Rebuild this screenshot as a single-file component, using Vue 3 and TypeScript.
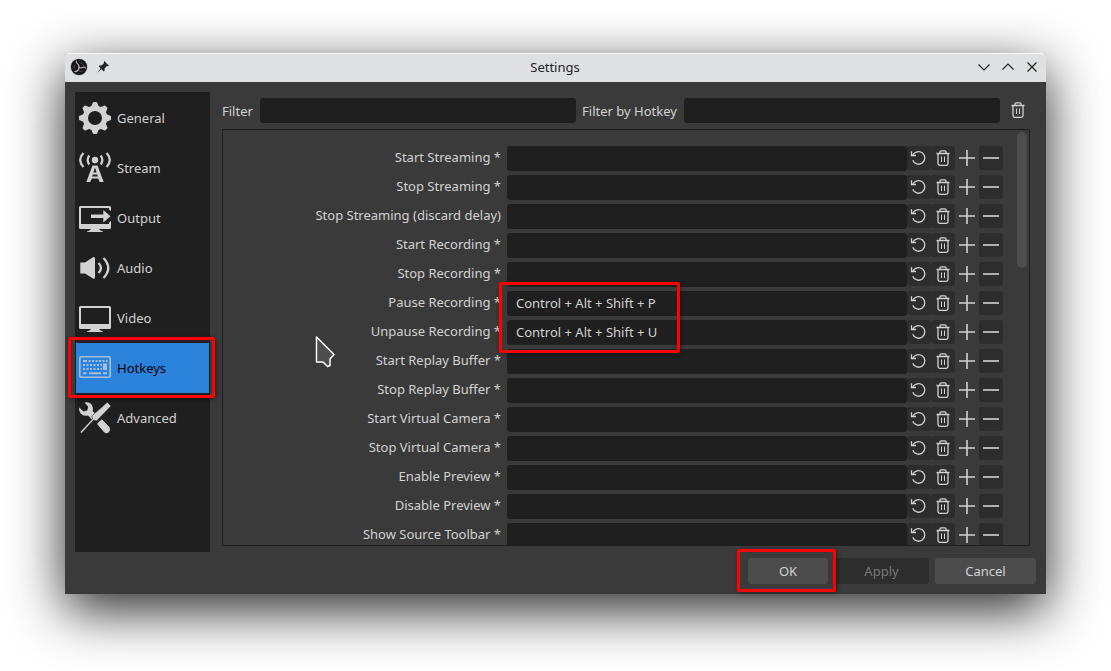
<script setup lang="ts">
import { ref } from 'vue'

interface Hotkey {
  id: string
  label: string
  keys: string
  marked?: boolean
}

const sections = ['General', 'Stream', 'Output', 'Audio', 'Video', 'Hotkeys', 'Advanced']
const active = ref('Hotkeys')
const filter = ref('')
const filterHotkey = ref('')

const names: string[] = [
  'Start Streaming *',
  'Stop Streaming *',
  'Stop Streaming (discard delay)',
  'Start Recording *',
  'Stop Recording *',
  'Pause Recording *',
  'Unpause Recording *',
  'Start Replay Buffer *',
  'Stop Replay Buffer *',
  'Start Virtual Camera *',
  'Stop Virtual Camera *',
  'Enable Preview *',
  'Disable Preview *',
  'Show Source Toolbar *',
]
const bound: Record<string, string> = {
  'Pause Recording *': 'Control + Alt + Shift + P',
  'Unpause Recording *': 'Control + Alt + Shift + U',
}
const hotkeys = ref<Hotkey[]>(
  names.map((label, i) => ({
    id: `hotkey-${i}`,
    label,
    keys: bound[label] ?? '',
    marked: label === 'Pause Recording *',
  })),
)
const teeth = [0, 45, 90, 135, 180, 225, 270, 315]
</script>

<template>
  <svg class="defs" aria-hidden="true">
    <symbol id="trash" viewBox="0 0 24 24">
      <g fill="none" stroke="currentColor" stroke-width="1.3">
        <path d="M5.500 7.500h13M9 7V5.700q0-.9 1-.9h4q1 0 1 .9V7M7 7.500v10q0 1.800 1.800 1.800h6.400q1.800 0 1.800-1.800v-10" />
        <path d="M10.500 10.500v5.500M13.500 10.500v5.500" stroke-width="1" />
      </g>
    </symbol>
    <symbol id="revert" viewBox="0 0 24 24">
      <g fill="none" stroke="currentColor" stroke-width="1.3">
        <path d="M5.800 9.300A6.300 6.300 0 1 1 5.700 14.300" />
        <path d="M4.500 5.200v4.300h4.500" />
      </g>
    </symbol>
    <symbol id="plus" viewBox="0 0 24 24">
      <path d="M4 12h16M12 4v16" fill="none" stroke="currentColor" stroke-width="1.6" />
    </symbol>
    <symbol id="minus" viewBox="0 0 24 24">
      <path d="M4 12h16" fill="none" stroke="currentColor" stroke-width="1.6" />
    </symbol>
  </svg>

  <div class="desktop">
    <section class="window" aria-label="Settings">
      <header class="titlebar">
        <div class="title-side">
          <svg class="logo" viewBox="0 0 18 18" aria-hidden="true">
            <circle cx="9" cy="9" r="8.600" fill="#9c9c9e" />
            <circle cx="9" cy="9" r="8" fill="#151417" />
            <g fill="none" stroke="#b5b3b6" stroke-width="1.200" stroke-linecap="round">
              <path d="M9 9.200C9.300 6.400 7.800 6.200 6.800 5.200C6.300 4.600 6.200 3.900 6.400 3.200" />
              <path d="M9 9.200C11.300 10.800 12.200 9.600 13.600 9.200C14.400 9 15 9.300 15.500 9.800" />
              <path d="M9 9.200C9.200 11.800 8 12.600 6.700 13.100C6 13.500 5.500 13.600 4.800 13.500" />
            </g>
            <path d="M10 4.500q3 .6 3.600 3M5 7q-1.300 1.600-.8 3.600M9.500 13.500q2 .6 3.500-.8" fill="none" stroke="#4b494d" />
          </svg>
          <button class="plain" type="button" aria-label="Keep above">
            <svg width="14" height="14" viewBox="0 0 14 14">
              <path d="M8.300 1L13 5.700L11.900 6.200L11 5.900L8.700 8.200L8.600 10.600L7.700 11.400L5.600 9.300L1.200 12.800L4.700 8.400L2.600 6.300L3.400 5.400L5.900 5.300L8.100 3L7.800 2.100Z" fill="#232629" />
            </svg>
          </button>
        </div>
        <h1>Settings</h1>
        <div class="title-side end">
          <button class="plain" type="button" aria-label="Minimize">
            <svg width="14" height="14" viewBox="0 0 14 14"><path d="M1.500 4.500L7 10l5.500-5.500" /></svg>
          </button>
          <button class="plain" type="button" aria-label="Maximize">
            <svg width="14" height="14" viewBox="0 0 14 14"><path d="M1.500 9.500L7 4l5.500 5.500" /></svg>
          </button>
          <button class="plain" type="button" aria-label="Close">
            <svg width="14" height="14" viewBox="0 0 14 14"><path d="M2.500 2.500l9 9M11.500 2.500l-9 9" /></svg>
          </button>
        </div>
      </header>

      <div class="body">
        <div class="columns">
          <nav class="sidebar" aria-label="Sections">
            <button
              v-for="s in sections"
              :key="s"
              type="button"
              class="section"
              :class="{ active: s === active }"
              @click="active = s"
            >
              <svg class="section-icon" viewBox="0 0 32 32" aria-hidden="true">
                <g v-if="s === 'General'" fill="currentColor">
                  <circle cx="16" cy="16" r="9.700" fill="none" stroke="currentColor" stroke-width="5.400" />
                  <path v-for="a in teeth" :key="a" d="M11.800 5.500L13.800 .8Q14 0 14.800 0h2.400Q18 0 18.200 .8L20.200 5.500z" :transform="`rotate(${a} 16 16)`" />
                </g>
                <g v-else-if="s === 'Stream'" fill="none" stroke="currentColor" stroke-width="2.200">
                  <circle cx="16" cy="8" r="3.200" fill="currentColor" stroke="none" />
                  <path d="M10.300 3.500Q7 8 10.300 12.500M21.700 3.500Q25 8 21.700 12.500M4.400 1Q-2 8 4.400 15M27.600 1Q34 8 27.600 15" />
                  <path d="M13.500 13.500h5l6.200 16.500h-4l-1.500-3.500h-6.400L11.300 30h-4zM16 15.500l-1.600 5h3.200zM13.800 22.500l-.7 2h5.800l-.7-2z" fill="currentColor" fill-rule="evenodd" stroke="none" />
                </g>
                <g v-else-if="s === 'Output'" fill="currentColor">
                  <path d="M1.500 4h29Q32 4 32 5.500V9l-2-1.500V6H2v16h28v-1.500l2-1.500v6.500Q32 27 30.500 27H20.500v1l3.500 1.500v.5H8v-.5l3.500-1.500v-1H1.500Q0 27 0 25.500v-20Q0 4 1.500 4z" />
                  <path d="M12 12.500h12.300V8L31.500 14.200 24.300 20.500V16H12z" />
                </g>
                <g v-else-if="s === 'Audio'" fill="currentColor">
                  <path d="M1.300 10.500H6L14 5.200Q16 4.500 16 6.500v19Q16 27.500 14 26.500L6 21.500H1.300z" />
                  <path d="M19.500 11Q24.500 16 19.500 21M24.500 6Q34 16 24.500 26" fill="none" stroke="currentColor" stroke-width="2.300" />
                </g>
                <path v-else-if="s === 'Video'" fill="currentColor" fill-rule="evenodd" d="M1.500 4h29Q32 4 32 5.500v20Q32 27 30.500 27H20.500v1l3.500 1.500v.5H8v-.5l3.500-1.500v-1H1.500Q0 27 0 25.500v-20Q0 4 1.500 4zM2 6v16h28V6z" />
                <g v-else-if="s === 'Hotkeys'" fill="none" stroke="currentColor">
                  <rect x=".8" y="4.800" width="30.400" height="20.400" rx="1.500" stroke-width="1.600" />
                  <path d="M4 9h24.500" stroke-width="2" stroke-dasharray="4 1.500 2 1.500 2 1.500 2 1.500 2 1.500 2 1.500 2 40" />
                  <path d="M4 13h19M4 17h19" stroke-width="2" stroke-dasharray="2 1.500" />
                  <path d="M26 11.500v6.500" stroke-width="4" />
                  <path d="M4 21.200h3.500M10 21.200h12M24 21.200h4" stroke-width="2" />
                </g>
                <g v-else>
                  <path d="M5.500 .6Q10.500 -.6 13 3.400Q14.500 6 13.600 9L17.300 12.800L12.800 17.200L9 13.500Q4.500 14.700 1.700 11.500Q-.6 8.500 .3 5.600L4.400 9.500L8.200 8.600L9.200 4.800z" fill="currentColor" />
                  <path d="M18.500 21.800L22.800 17.800L30 25.200Q31.400 28 29.600 29.900Q27.800 31.800 25.400 30z" fill="currentColor" stroke="currentColor" stroke-linejoin="round" />
                  <path d="M28.300 .3L32 4L17.500 19L14.700 18L2.600 31.200L1.200 30.600L2 29L13.500 16.700L12.800 14z" fill="currentColor" stroke="#1f1f1f" stroke-width=".5" />
                </g>
              </svg>
              <span>{{ s }}</span>
              <i v-if="s === 'Hotkeys'" class="mark mark-section"></i>
            </button>
          </nav>

          <main class="panel">
            <div class="filters">
              <label for="filter">Filter</label>
              <input id="filter" v-model="filter" type="text" class="field" />
              <label for="filter-hotkey">Filter by Hotkey</label>
              <input id="filter-hotkey" v-model="filterHotkey" type="text" class="field" />
              <button type="button" class="tool bare" aria-label="Clear filter">
                <svg viewBox="0 0 24 24"><use href="#trash" /></svg>
              </button>
            </div>

            <div class="list">
              <div class="rows">
                <div v-for="h in hotkeys" :key="h.id" class="row">
                  <label :for="h.id">{{ h.label }}</label>
                  <div class="entry">
                    <input :id="h.id" v-model="h.keys" type="text" class="field" />
                    <i v-if="h.marked" class="mark mark-keys"></i>
                  </div>
                  <button type="button" class="tool" aria-label="Revert"><svg viewBox="0 0 24 24"><use href="#revert" /></svg></button>
                  <button type="button" class="tool" aria-label="Clear"><svg viewBox="0 0 24 24"><use href="#trash" /></svg></button>
                  <button type="button" class="tool bare" aria-label="Add"><svg viewBox="0 0 24 24"><use href="#plus" /></svg></button>
                  <button type="button" class="tool" aria-label="Remove"><svg viewBox="0 0 24 24"><use href="#minus" /></svg></button>
                </div>
              </div>
              <div class="scrollbar"><div class="thumb"></div></div>
            </div>
          </main>
        </div>

        <footer class="actions">
          <button type="button" class="ok">OK<i class="mark mark-ok"></i></button>
          <button type="button" class="apply" disabled>Apply</button>
          <button type="button" class="cancel">Cancel</button>
        </footer>
      </div>

      <svg class="pointer" viewBox="0 0 20 34" aria-hidden="true">
        <path d="M1.500 2L19 19.500L15 24V30.500L12.500 31.500L8 27H1.500z" fill="#4d4d4d" stroke="#fff" stroke-width="1.500" stroke-linejoin="round" />
      </svg>
    </section>
  </div>
</template>

<style>
body {
  margin: 0;
  background: #fff;
}
</style>

<style scoped>
.defs {
  position: absolute;
  width: 0;
  height: 0;
}
.desktop {
  box-sizing: border-box;
  display: flex;
  height: 100vh;
  padding: 53px 65px 77px;
  overflow: hidden;
  font: 13px/18px "Noto Sans", sans-serif;
  color: #d2d2d2;
}
button,
input {
  margin: 0;
  padding: 0;
  border: 0;
  font: inherit;
  color: inherit;
}
svg {
  display: block;
}
.window {
  position: relative;
  flex: 1;
  min-width: 0;
  display: flex;
  flex-direction: column;
  background: #3a3a3a;
  border-radius: 4px 4px 0 0;
  box-shadow: 0 16px 54px rgba(0, 0, 0, 0.85);
}
.titlebar {
  box-sizing: border-box;
  height: 29px;
  padding: 0 6px 1px 5px;
  display: grid;
  grid-template-columns: 1fr auto 1fr;
  align-items: center;
  background: #dee0e2;
  box-shadow: inset 0 1px #f8f8f8;
  border-radius: 4px 4px 0 0;
  color: #232629;
}
h1 {
  margin: 0;
  font-size: 13px;
  font-weight: 400;
}
.title-side {
  display: flex;
  align-items: center;
  gap: 7px;
}
.end {
  justify-content: flex-end;
  gap: 8px;
}
.logo {
  width: 18px;
  height: 18px;
}
.plain {
  width: 16px;
  height: 16px;
  display: grid;
  place-items: center;
  background: none;
}
.end path {
  fill: none;
  stroke: #232629;
  stroke-width: 1.2;
}
.body {
  flex: 1;
  min-height: 0;
  display: flex;
  flex-direction: column;
  gap: 6px;
  padding: 10px;
}
.columns {
  flex: 1;
  min-height: 0;
  display: flex;
  gap: 6px;
}
.sidebar {
  box-sizing: border-box;
  width: 135px;
  padding: 1px;
  background: #1f1f1f;
}
.section {
  position: relative;
  width: 100%;
  height: 50px;
  padding: 0 3px;
  display: flex;
  align-items: center;
  gap: 6px;
  background: none;
}
.section.active {
  background: #2a82da;
  color: #000;
}
.section-icon {
  width: 32px;
  height: 32px;
  flex: none;
  color: #d2d2d2;
}
.active .section-icon {
  color: #a9bfdc;
}
.panel {
  flex: 1;
  min-width: 0;
  display: flex;
  flex-direction: column;
  gap: 6px;
  padding: 6px;
}
.filters {
  display: flex;
  align-items: flex-start;
  gap: 6px;
}
.filters label {
  padding: 4px 1px 0 0;
}
.filters .field {
  flex: 1;
  min-width: 0;
}
.field {
  box-sizing: border-box;
  height: 25px;
  padding: 0 9px 1px;
  background: #1f1f1f;
  border-radius: 3px;
  outline: none;
}
.tool {
  width: 24px;
  height: 24px;
  flex: none;
  background: #2d2d2d;
  border-radius: 3px;
}
.bare {
  background: none;
}
.tool svg {
  width: 24px;
  height: 24px;
}
.list {
  flex: 1;
  min-height: 0;
  overflow: hidden;
  display: flex;
  gap: 14px;
  border: 1px solid #1f1f1f;
}
.rows {
  flex: 1;
  min-width: 0;
  display: flex;
  flex-direction: column;
  gap: 4px;
  padding-top: 16px;
}
.row {
  flex: none;
  display: flex;
  align-items: flex-start;
  height: 25px;
}
.row label {
  width: 278px;
  padding-top: 2px;
  margin-right: 6px;
  text-align: right;
}
.entry {
  position: relative;
  flex: 1;
  min-width: 0;
}
.entry .field {
  display: block;
  width: 100%;
}
.scrollbar {
  width: 10px;
  padding: 2px 2px 0 0;
}
.thumb {
  height: 136px;
  border-radius: 5px;
  background: #4d4d4d;
}
.actions {
  display: flex;
  justify-content: flex-end;
  gap: 6px;
}
.actions button {
  position: relative;
  height: 26px;
  background: #4c4c4c;
  border-radius: 3px;
}
.actions .ok {
  width: 80px;
  z-index: 1;
}
.actions .apply {
  width: 95px;
  background: #2d2d2d;
  color: #777;
}
.actions .cancel {
  width: 101px;
}
.mark {
  position: absolute;
  z-index: 2;
  border: 3px solid #f00;
  border-radius: 2px;
  box-shadow: 1px 1px 4px rgba(0, 0, 0, 0.4);
  pointer-events: none;
}
.mark-section {
  inset: -6px -6px -5px -8px;
}
.mark-keys {
  left: -8px;
  top: -9px;
  width: 175px;
  height: 65px;
}
.mark-ok {
  inset: -9px -8px -8px -11px;
}
.pointer {
  position: absolute;
  left: 250px;
  top: 282px;
  width: 20px;
  height: 34px;
}
</style>
